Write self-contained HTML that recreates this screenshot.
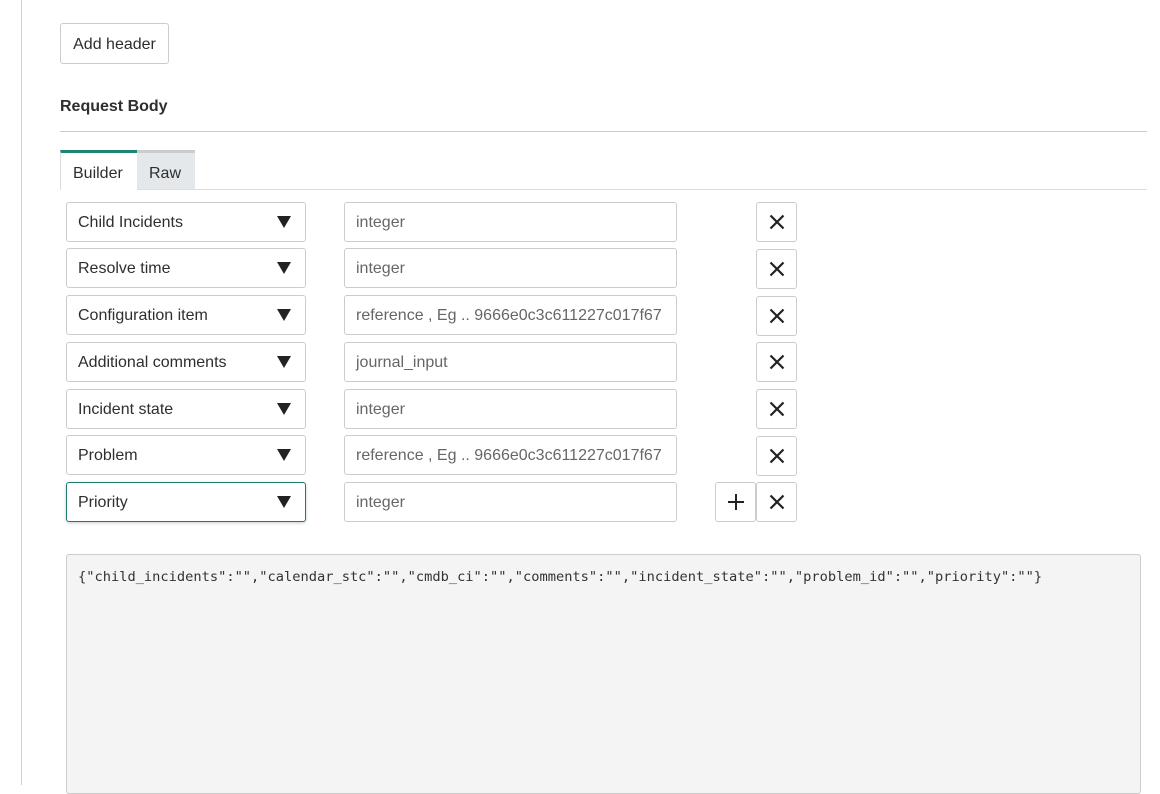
<!DOCTYPE html>
<html><head><style>
*{box-sizing:border-box;margin:0;padding:0}
body{width:1160px;height:785px;background:#fff;font-family:"Liberation Sans",sans-serif;color:#2e2e2e;position:relative;overflow:hidden}
.abs{position:absolute}
.vl{left:21px;top:0;width:1px;height:785px;background:#d0d0d0}
.btn{border:1px solid #ccc;border-radius:3px;background:#fff;display:flex;align-items:center;justify-content:center}
.sel,.inp{position:absolute;height:40px;border:1px solid #ccc;border-radius:3px;background:#fff;font-size:16px;display:flex;align-items:center;padding-left:11px;padding-top:2px}
.sel{left:66px;width:240px;color:#2e2e2e}
.inp{left:344px;width:333px;color:#666}
.tri{position:absolute;right:14px;top:13px;width:0;height:0;border-left:7px solid transparent;border-right:7px solid transparent;border-top:12px solid #222}
.x{position:absolute;left:756px;width:41px;height:40px}
</style></head><body>
<div class="abs vl"></div>
<div class="abs btn" style="left:60px;top:23px;width:109px;height:41px;font-size:16px;padding-top:2px">Add header</div>
<div class="abs" style="left:60px;top:98px;font-size:16px;font-weight:bold">Request Body</div>
<div class="abs" style="left:60px;top:131px;width:1087px;height:1px;background:#ccc"></div>
<div class="abs" style="left:60px;top:189px;width:1087px;height:1px;background:#ddd"></div>
<div class="abs" style="left:60px;top:150px;width:77px;height:40px;background:#fff;border-top:3px solid #1f8476;border-left:1px solid #ddd;font-size:16px;padding:12px 0 0 12px">Builder</div>
<div class="abs" style="left:137px;top:150px;width:58px;height:39px;background:#e5e8eb;border-top:3px solid #ccc;font-size:16px;padding:12px 0 0 12px">Raw</div>

<div class="sel" style="top:202px">Child Incidents<span class="tri"></span></div>
<div class="inp" style="top:202px">integer</div>
<div class="sel" style="top:248px">Resolve time<span class="tri"></span></div>
<div class="inp" style="top:248px">integer</div>
<div class="sel" style="top:295px">Configuration item<span class="tri"></span></div>
<div class="inp" style="top:295px">reference , Eg .. 9666e0c3c611227c017f67</div>
<div class="sel" style="top:342px">Additional comments<span class="tri"></span></div>
<div class="inp" style="top:342px">journal_input</div>
<div class="sel" style="top:389px">Incident state<span class="tri"></span></div>
<div class="inp" style="top:389px">integer</div>
<div class="sel" style="top:435px">Problem<span class="tri"></span></div>
<div class="inp" style="top:435px">reference , Eg .. 9666e0c3c611227c017f67</div>
<div class="sel" style="top:482px;border-color:#1f7a6e;box-shadow:0 1px 3px rgba(0,0,0,.2)">Priority<span class="tri"></span></div>
<div class="inp" style="top:482px">integer</div>

<svg width="0" height="0" style="position:absolute"><defs><g id="xg"><path d="M-6.5,-6.5L6.5,6.5M6.5,-6.5L-6.5,6.5" stroke="#222" stroke-width="2.2"/></g></defs></svg>
<div class="btn x" style="top:202px"><svg width="20" height="20" viewBox="-10 -10 20 20"><use href="#xg"/></svg></div>
<div class="btn x" style="top:249px"><svg width="20" height="20" viewBox="-10 -10 20 20"><use href="#xg"/></svg></div>
<div class="btn x" style="top:296px"><svg width="20" height="20" viewBox="-10 -10 20 20"><use href="#xg"/></svg></div>
<div class="btn x" style="top:342px"><svg width="20" height="20" viewBox="-10 -10 20 20"><use href="#xg"/></svg></div>
<div class="btn x" style="top:389px"><svg width="20" height="20" viewBox="-10 -10 20 20"><use href="#xg"/></svg></div>
<div class="btn x" style="top:436px"><svg width="20" height="20" viewBox="-10 -10 20 20"><use href="#xg"/></svg></div>
<div class="btn x" style="top:482px"><svg width="20" height="20" viewBox="-10 -10 20 20"><use href="#xg"/></svg></div>
<div class="btn" style="position:absolute;left:715px;top:482px;width:41px;height:40px"><svg width="20" height="20" viewBox="-10 -10 20 20"><path d="M-8,0H8M0,-8V8" stroke="#222" stroke-width="2"/></svg></div>

<div class="abs" style="left:66px;top:554px;width:1075px;height:240px;background:#f4f4f4;border:1px solid #ccc;border-radius:3px;font-family:'DejaVu Sans Mono','Liberation Mono',monospace;font-size:13.7px;color:#333;padding:14px 0 0 11px;white-space:pre">{"child_incidents":"","calendar_stc":"","cmdb_ci":"","comments":"","incident_state":"","problem_id":"","priority":""}</div>
</body></html>
